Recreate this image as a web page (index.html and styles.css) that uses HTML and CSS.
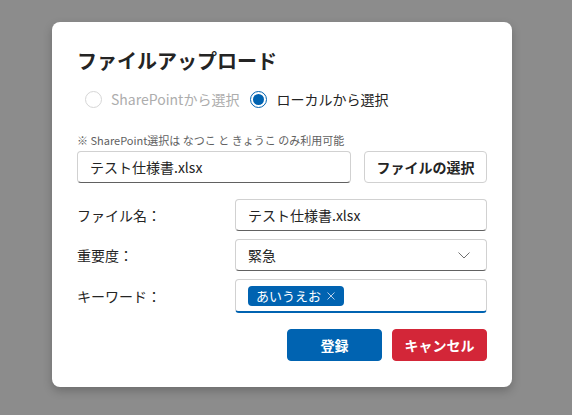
FILE: index.html
```html
<!DOCTYPE html>
<html lang="ja">
<head>
<meta charset="utf-8">
<link rel="stylesheet" href="styles.css">
</head>
<body>
<div class="dialog">
  <h1 class="title">ファイルアップロード</h1>
  <div class="radios">
    <label class="radio disabled"><span class="circle"></span><span>SharePointから選択</span></label>
    <label class="radio checked"><span class="circle"><span class="dot"></span></span><span>ローカルから選択</span></label>
  </div>
  <div class="note">※ SharePoint選択は なつこ と きょうこ のみ利用可能</div>
  <div class="file-row">
    <div class="input grow">テスト仕様書.xlsx</div>
    <button class="btn">ファイルの選択</button>
  </div>
  <div class="form">
    <div class="label">ファイル名：</div>
    <div class="input">テスト仕様書.xlsx</div>
    <div class="label">重要度：</div>
    <div class="input select"><span>緊急</span>
      <svg width="16" height="16" viewBox="0 0 16 16"><path d="M2.5 5.5l5.5 5.5 5.5-5.5" fill="none" stroke="#707070" stroke-width="1"/></svg>
    </div>
    <div class="label">キーワード：</div>
    <div class="input tags"><span class="tag">あいうえお<svg width="10" height="10" viewBox="0 0 10 10"><path d="M1.5 1.5l7 7M8.5 1.5l-7 7" stroke="#b9cfe8" stroke-width="1"/></svg></span></div>
  </div>
  <div class="actions">
    <button class="btn primary">登録</button>
    <button class="btn danger">キャンセル</button>
  </div>
</div>
</body>
</html>
```
FILE: styles.css
```css
* { box-sizing: border-box; }
html, body { margin: 0; height: 100%; }
body {
  background: #8c8c8c;
  font-family: "Noto Sans CJK JP", "Noto Sans", sans-serif;
  color: #242424;
  font-size: 14px;
  padding: 22px 0 0 52px;
}
.dialog {
  width: 460px;
  height: 365px;
  background: #fff;
  border-radius: 8px;
  box-shadow: 0 4px 10px rgba(0,0,0,0.22);
  padding: 25px 25px;
}
.title {
  margin: 0;
  font-size: 20px;
  font-weight: 700;
  line-height: 28px;
  color: #242424;
}
.radios {
  display: flex;
  align-items: center;
  height: 32px;
  margin-top: 8px;
  gap: 11px;
  padding-left: 8px;
}
.radio { display: flex; align-items: center; gap: 9px; font-size: 14px; }
.radio.disabled { color: #adadad; }
.circle {
  width: 17px; height: 17px; border-radius: 50%;
  border: 1px solid #d6d6d6;
  display: flex; align-items: center; justify-content: center;
}
.radio.checked .circle { border-color: #0063b1; }
.dot { width: 11px; height: 11px; border-radius: 50%; background: #0063b1; }
.note {
  margin-top: 17px;
  font-size: 11px;
  line-height: 16px;
  color: #616161;
}
.file-row {
  display: flex;
  gap: 13px;
  margin-top: 3px;
}
.input {
  height: 32px;
  border: 1px solid #d1d1d1;
  border-bottom-color: #616161;
  border-radius: 4px;
  padding: 0 12px;
  display: flex;
  align-items: center;
  font-size: 14px;
  color: #242424;
}
.grow { flex: 1; }
.btn {
  font-family: inherit;
  font-size: 14px;
  font-weight: 700;
  height: 32px;
  border-radius: 4px;
  border: 1px solid #d1d1d1;
  background: #fff;
  color: #242424;
  width: 123px;
  padding: 0;
}
.form {
  margin-top: 16px;
  display: grid;
  grid-template-columns: 158px 1fr;
  row-gap: 8px;
  align-items: center;
}
.label { font-size: 14px; color: #242424; }
.select { justify-content: space-between; padding-right: 14px; }
.tags { height: 34px; padding-left: 12px; border-bottom: 2px solid #0063b1; }
.tag {
  background: #0063b1;
  color: #fff;
  border-radius: 4px;
  height: 20px;
  padding: 0 8px;
  display: inline-flex;
  align-items: center;
  gap: 5px;
  font-size: 13px;
}
.actions {
  margin-top: 16px;
  display: flex;
  justify-content: flex-end;
  gap: 10px;
}
.actions .btn { width: 95px; }
.primary { background: #0063b1; border-color: #0063b1; color: #fff; }
.danger { background: #d32638; border-color: #d32638; color: #fff; }
```
